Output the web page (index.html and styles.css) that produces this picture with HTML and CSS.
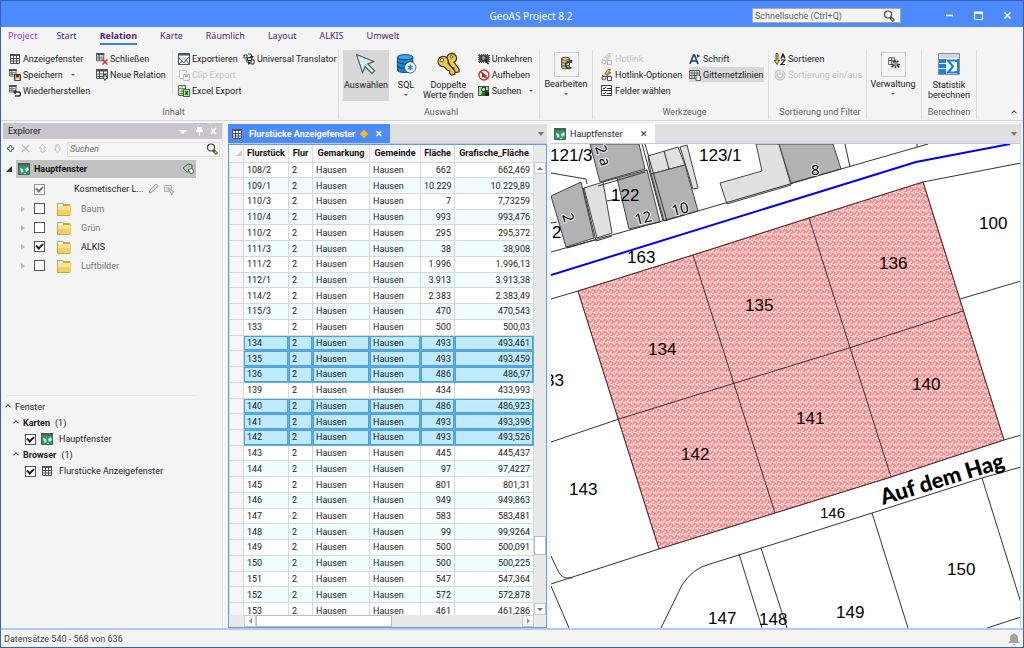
FILE: index.html
```html
<!DOCTYPE html>
<html lang="de">
<head>
  <meta charset="UTF-8" />
  <meta name="viewport" content="width=device-width, initial-scale=1.0"/>
  <title>GeoAS Project 8.2</title>
  <link rel="stylesheet" href="styles.css">
</head>
<body>
  <!-- shared icons -->
  <svg class="sprite" aria-hidden="true">
    <symbol id="i-table" viewBox="0 0 12 12">
      <path fill="#fff" d="M1 1h10v10H1z"/><path fill="#4d5358" d="M1 1h10v2H1z"/>
      <path fill="none" stroke="#4d5358" d="M1.5 1.5h9v9h-9zM1 5.5h10M1 8h10M4.5 3v8M7.5 3v8"/>
    </symbol>
    <symbol id="i-tables" viewBox="0 0 12 12">
      <path fill="#fff" stroke="#4d5358" d="M.5.5h8v8h-8z"/><path fill="#4d5358" d="M0 0h9v2.500H0z"/>
      <path fill="none" stroke="#4d5358" d="M0 4.500h8M0 6.500h8M3.500 2v6"/>
    </symbol>
    <symbol id="i-save" viewBox="0 0 12 12">
      <use href="#i-tables" width="10" height="10"/>
      <path fill="#d9a62c" stroke="#3d4043" d="M5.500 5.500h6v6h-6z"/><path fill="#3d4043" d="M7 6h3v2H7z"/><path fill="#fff" d="M7 9.500h3V11H7z"/>
    </symbol>
    <symbol id="i-restore" viewBox="0 0 12 12">
      <use href="#i-tables" width="10" height="10"/>
      <path fill="none" stroke="#2d3338" stroke-width="1.600" d="M6 7h3.500a2 2 0 0 1 0 4H6"/><path fill="#2d3338" d="M4 7l3-2.500v5z"/>
    </symbol>
    <symbol id="i-close" viewBox="0 0 12 12">
      <use href="#i-tables" width="11" height="11"/>
      <path stroke="#d92b2b" stroke-width="1.500" d="M6.500 6.500l5 5M11.500 6.500l-5 5"/>
    </symbol>
    <symbol id="i-new" viewBox="0 0 12 12">
      <path fill="#fff" stroke="#4d5358" d="M.5.5h11v9H.5z"/><path fill="#4d5358" d="M0 0h12v2.500H0z"/>
      <path stroke="#4d5358" d="M0 5h11M0 7.500h7M3.500 2v7M7.500 2v5"/>
      <path fill="#b9dbe9" stroke="#3d4043" d="M8 5.500h2v2h1.500L9 11.500 6.500 7.500H8z"/>
    </symbol>
    <symbol id="i-export" viewBox="0 0 12 12">
      <path fill="#fff" stroke="#4d5358" d="M.5.500h11v11H.5z"/><path fill="#4d5358" d="M0 0h12v2.500H0z"/>
      <path fill="none" stroke="#4d5358" d="M1 11l3-3 2 2 2-3 3 4M1 5l3 3M11 4L8 7"/><path fill="#b9dbe9" d="M4 4h4v3H4z"/>
    </symbol>
    <symbol id="i-trans" viewBox="0 0 12 12">
      <path fill="none" stroke="#2d3338" d="M1 2h3v3H1zM8 7h3v4H8zM5 1h3l1 3M3 6c0 3 2 4 4 4"/>
      <path fill="#b9dbe9" stroke="#2d3338" d="M4.500 4.500h4v3h-4z"/><path fill="#2d3338" d="M7 3h4L9 6zM5 8l3 2-3 2z"/>
    </symbol>
    <symbol id="i-clip" viewBox="0 0 12 12">
      <path fill="none" stroke="#c6c6c6" d="M1.500 1.500h7v8h-7z"/><path fill="#eee" stroke="#bdbdbd" d="M5.500 5.500h6v6h-6z"/><path fill="#bdbdbd" d="M7 6h3v2H7z"/>
    </symbol>
    <symbol id="i-excel" viewBox="0 0 12 12">
      <path fill="#fff" stroke="#566b50" d="M.5.500h7v10h-7z"/><path stroke="#5d9a4b" d="M1 3.500h6M1 6h6M1 8.500h6M4 1v9"/>
      <path fill="#d9eed2" stroke="#356d28" d="M5.500 4.500h6v7h-6z"/><path stroke="#16720d" stroke-width="1.500" d="M7 6l3 4M10 6l-3 4"/>
    </symbol>
    <symbol id="i-invert" viewBox="0 0 12 12">
      <path fill="#4d5358" d="M0 1h12v9H0z"/><path stroke="#f4f4f4" stroke-dasharray="1 1" d="M0 1.500h12M0 9.500h12M.5 1v9M11.500 1v9"/>
      <circle cx="5.500" cy="5" r="2.500" fill="#7f99a5" stroke="#22282c"/><path stroke="#22282c" stroke-width="1.500" d="M7.500 7l3 4"/>
    </symbol>
    <symbol id="i-clear" viewBox="0 0 12 12">
      <circle cx="6" cy="6" r="5" fill="#fff" stroke="#dc2b2b" stroke-width="1.400"/>
      <path fill="#3c4650" d="M4 3l5 4-2 .3 1 2-1 .5-1-2-2 1z"/><path stroke="#dc2b2b" stroke-width="1.400" d="M2.500 2.500l7 7"/>
    </symbol>
    <symbol id="i-find" viewBox="0 0 12 12">
      <path fill="#2e6b35" d="M0 1h11v10H0z"/><path fill="#a7d58b" d="M1 2h3l1 4-2 4H1zM8 2h2v3H8z"/>
      <circle cx="5.500" cy="4.500" r="2" fill="#fff" stroke="#1c2b1e"/><path stroke="#1c2b1e" stroke-width="1.500" d="M7 6l4 4"/><path fill="#1c2b1e" d="M7 7h4v4H7z"/>
    </symbol>
    <symbol id="i-link" viewBox="0 0 12 12">
      <path fill="#e7c447" stroke="#4b4a38" stroke-width=".7" d="M7 .5L3.500 5h3L5 8l5-4.500H7.500L9.500.5z"/>
      <circle cx="3" cy="9" r="2" fill="#fff" stroke="#41484d"/><path fill="#fff" stroke="#41484d" d="M6.500 7.500h4v4h-4zM1 6l2 2"/>
    </symbol>
    <symbol id="i-fields" viewBox="0 0 12 12">
      <path fill="#fff" stroke="#3b4045" d="M.5.5h10v10H.5z"/><path stroke="#22272b" fill="none" d="M2 3l1 1 2-2M2 8l1 1 2-2M6 3.500h4M6 8.500h4M1 5.500h9"/>
    </symbol>
    <symbol id="i-font" viewBox="0 0 12 12">
      <path fill="none" stroke="#1c3e70" stroke-width="1.700" d="M1 11L4.500 2h1L9 11M2.500 8h5"/><path fill="#1c3e70" d="M8 1l3 2-3 2z"/>
    </symbol>
    <symbol id="i-grid" viewBox="0 0 12 12">
      <path fill="#fff" stroke="#5a5f63" d="M.5 1.500h10v8H.5zM0 4h11M0 6.500h11M3 1v9M5.500 1v9M8 1v9"/><path fill="#e8e8e8" stroke="#5a5f63" d="M7 6h3l1.500 1.500v4H7z"/>
    </symbol>
    <symbol id="i-sort" viewBox="0 0 12 12">
      <path fill="#f0c93c" stroke="#2f2f2f" stroke-width=".8" d="M2 .5h2v7h1.500L3 11.500.5 7.500H2z"/>
      <path fill="none" stroke="#222" stroke-width="1.200" d="M7 5.500L8.800 1h.4L11 5.500M7.500 4h3M7 7h4l-4 4.500h4"/>
    </symbol>
    <symbol id="i-power" viewBox="0 0 12 12">
      <circle cx="6" cy="6" r="5" fill="none" stroke="#c4c4c4" stroke-width="1.200"/><path fill="none" stroke="#bcbcbc" stroke-width="1.300" d="M6 2.500V6M4 4a2.800 2.800 0 1 0 4 0"/>
    </symbol>
    <symbol id="i-search" viewBox="0 0 12 12">
      <circle cx="5" cy="4.500" r="3.500" fill="#fff" stroke="#3b3f42" stroke-width="1.200"/><path stroke="#3b3f42" stroke-width="3" d="M7.500 7.500l3.500 3.500"/><path stroke="#e9c84a" stroke-width="1.300" d="M8.500 8.500l2 2"/>
    </symbol>
    <symbol id="i-map" viewBox="0 0 12 12">
      <path fill="#2c9d6a" stroke="#505a55" d="M.5.500h11v11H.5z"/><path fill="#505a55" d="M0 0h12v2.500H0z"/><path fill="#cfeeda" d="M2 5l3 1 .5 3-2 1zM7 6l3-2 1 3-3 2zM6 10h2v1H6z"/>
    </symbol>
    <symbol id="i-folder" viewBox="0 0 14 14">
      <path fill="#c9a741" d="M0 1h6l1 1h6v12H0z"/><path fill="#fff" d="M1 2h5v2H1z"/><path fill="#62b9b0" d="M2 1h3v1H2z"/>
      <path fill="#ecd06a" d="M1 4h11l2-1v10H1z"/><path fill="#f7e391" d="M1 4h12v4H1z"/>
    </symbol>
  </svg>

  <header class="titlebar">
    <h1>GeoAS Project 8.2</h1>
    <div class="title-right">
      <div class="quick">
        <input type="text" aria-label="Schnellsuche" placeholder="Schnellsuche (Ctrl+Q)">
        <svg class="ico"><use href="#i-search"/></svg>
      </div>
      <div class="window-buttons">
        <button aria-label="Minimieren"><svg viewBox="0 0 9 9"><path stroke="#fff" stroke-width="1.500" d="M1 4.500h7"/></svg></button>
        <button aria-label="Maximieren"><svg viewBox="0 0 9 9"><path fill="none" stroke="#fff" d="M.5 1h8v7.500h-8z"/><path fill="#fff" d="M0 1h9v2H0z"/></svg></button>
        <button aria-label="Beenden"><svg viewBox="0 0 9 9"><path stroke="#fff" stroke-width="1.500" d="M1.500 1.500l6 6M7.500 1.500l-6 6"/></svg></button>
      </div>
    </div>
  </header>

  <nav class="tabs">
    <a href="#" class="project">Project</a>
    <a href="#">Start</a>
    <a href="#" class="active">Relation</a>
    <a href="#">Karte</a>
    <a href="#">Räumlich</a>
    <a href="#">Layout</a>
    <a href="#">ALKIS</a>
    <a href="#">Umwelt</a>
  </nav>

  <section class="ribbon">
    <div class="group g-inhalt">
      <div class="tools">
        <div class="col c-window">
          <button class="tool"><svg class="ico"><use href="#i-table"/></svg>Anzeigefenster</button>
          <button class="tool"><svg class="ico"><use href="#i-save"/></svg>Speichern<i class="caret"></i></button>
          <button class="tool"><svg class="ico"><use href="#i-restore"/></svg>Wiederherstellen</button>
        </div>
        <div class="col c-rel">
          <button class="tool"><svg class="ico"><use href="#i-close"/></svg>Schließen</button>
          <button class="tool"><svg class="ico"><use href="#i-new"/></svg>Neue Relation</button>
        </div>
        <div class="col c-export">
          <button class="tool"><svg class="ico"><use href="#i-export"/></svg>Exportieren</button>
          <button class="tool" disabled><svg class="ico"><use href="#i-clip"/></svg>Clip Export</button>
          <button class="tool"><svg class="ico"><use href="#i-excel"/></svg>Excel Export</button>
        </div>
        <div class="col">
          <button class="tool"><svg class="ico"><use href="#i-trans"/></svg>Universal Translator</button>
        </div>
      </div>
      <h2>Inhalt</h2>
    </div>

    <div class="group g-auswahl">
      <div class="tools">
        <button class="big pressed">
          <svg viewBox="0 0 28 28"><path fill="#d3edf6" stroke="#4b555b" stroke-width="1.300" d="M3 3l20 8-7 3 8 8-3 3-8-8-3 7z"/></svg>
          Auswählen
        </button>
        <button class="big">
          <svg viewBox="0 0 28 28"><path fill="#1687d0" stroke="#0d3d63" d="M4 6v15c0 4 18 4 18 0V6"/><ellipse cx="13" cy="6" rx="9" ry="3" fill="#3fa7e4" stroke="#0d3d63"/><path fill="none" stroke="#0d3d63" d="M4 11c0 4 18 4 18 0M4 16c0 4 18 4 18 0"/><circle cx="19" cy="18" r="6.500" fill="#fff" stroke="#33556c"/><path stroke="#1687d0" stroke-width="1.500" d="M19 14.500v7M16 16.300l6 3.500M22 16.300l-6 3.500"/></svg>
          SQL
          <i class="caret"></i>
        </button>
        <button class="big">
          <svg viewBox="0 0 28 28"><g fill="#efc94b" stroke="#3b3522" stroke-width="1.400"><path d="M13 8a5.500 5.500 0 1 1 8 4l6 8v3l-4 1-2-2v-3l-3-1-3-5z"/><path d="M9 17a6 6 0 1 1 5-4l8 9v4l-4 1-2-2v-3l-3-1z"/></g><circle cx="7" cy="9.500" r="2" fill="#fff" stroke="#3b3522"/><circle cx="18" cy="5.500" r="1.500" fill="#fff" stroke="#3b3522"/></svg>
          Doppelte<br>Werte finden
        </button>
        <div class="col">
          <button class="tool"><svg class="ico"><use href="#i-invert"/></svg>Umkehren</button>
          <button class="tool"><svg class="ico"><use href="#i-clear"/></svg>Aufheben</button>
          <button class="tool"><svg class="ico"><use href="#i-find"/></svg>Suchen<i class="caret"></i></button>
        </div>
      </div>
      <h2>Auswahl</h2>
    </div>

    <div class="group g-edit">
      <div class="tools">
        <button class="big framed">
          <svg viewBox="0 0 24 24"><path fill="#edc54b" stroke="#3b3d3f" d="M7 6c0-2 8-2 8 0v9c0 2-8 2-8 0zM7 9c0 2 8 2 8 0M7 12c0 2 8 2 8 0M7 6c0 2 8 2 8 0"/><path fill="none" stroke="#3d4650" stroke-width="2" d="M17 10a3.500 3.500 0 1 0 0 5"/><path fill="#3d4650" d="M14 7h4v4z"/></svg>
          Bearbeiten
          <i class="caret"></i>
        </button>
      </div>
    </div>

    <div class="group g-werkzeuge">
      <div class="tools">
        <div class="col c-link">
          <button class="tool faded" disabled><svg class="ico"><use href="#i-link"/></svg>Hotlink</button>
          <button class="tool"><svg class="ico"><use href="#i-link"/></svg>Hotlink-Optionen</button>
          <button class="tool"><svg class="ico"><use href="#i-fields"/></svg>Felder wählen</button>
        </div>
        <div class="col">
          <button class="tool"><svg class="ico"><use href="#i-font"/></svg>Schrift</button>
          <button class="tool pressed"><svg class="ico"><use href="#i-grid"/></svg>Gitternetzlinien</button>
        </div>
      </div>
      <h2>Werkzeuge</h2>
    </div>

    <div class="group g-sort">
      <div class="tools">
        <div class="col">
          <button class="tool"><svg class="ico"><use href="#i-sort"/></svg>Sortieren</button>
          <button class="tool" disabled><svg class="ico"><use href="#i-power"/></svg>Sortierung ein/aus</button>
        </div>
      </div>
      <h2>Sortierung und Filter</h2>
    </div>

    <div class="group g-admin">
      <div class="tools">
        <button class="big framed">
          <svg viewBox="0 0 24 24"><path fill="#fff" stroke="#53595d" d="M7 5h6v7H7zM7 8h6M10 5v7"/><path stroke="#3d4448" stroke-width="1.500" d="M11 8l7 7M17 8l-7 7M14 7v9M10 12h9"/><circle cx="14" cy="11.500" r="2" fill="#7fa58c"/></svg>
          Verwaltung
          <i class="caret"></i>
        </button>
      </div>
    </div>

    <div class="group g-calc">
      <div class="tools">
        <button class="big">
          <svg viewBox="2 2 24 24"><path fill="#fff" stroke="#8a8f93" d="M3.500 3.500h21v21h-21z"/><path fill="#d5d7d9" d="M4 4h20v4H4z"/><path fill="#1b80e4" d="M4 9h7v4H4zM4 14h7v4H4zM4 19h7v5H4zM22 9h2v15h-2z"/><path fill="none" stroke="#1b80e4" stroke-width="2.200" d="M21 12v-1.500h-8l5 6-5 6h8V21"/></svg>
          Statistik<br>berechnen
        </button>
      </div>
      <h2>Berechnen</h2>
    </div>
    <button class="collapse" aria-label="Menüband einklappen"><i class="chev"></i></button>
  </section>

  <main>
    <aside class="explorer">
      <div class="panel-head">
        <h2>Explorer</h2>
        <svg viewBox="0 0 44 12"><path fill="#fff" d="M2 5h8L6 9zM19 5h7v2h-3v4h-1V7h-3zM20 2h5v3h-5z"/><path stroke="#fff" stroke-width="1.500" d="M34 3l5 6M39 3l-5 6"/></svg>
      </div>
      <div class="search-row">
        <svg viewBox="0 0 58 12">
          <path fill="#fff" stroke="#54707c" d="M4.500 2.500h2v2h2v2h-2v2h-2v-2h-2v-2h2z"/>
          <path stroke="#b7bcc0" stroke-width="1.300" d="M17 2l7 7M24 2l-7 7"/>
          <path fill="#fff" stroke="#b3bcc2" d="M37.500 1.500l3 3.500h-1.500v4h-3V5h-1.500zM52.500 9.500l3-3.500H54V2h-3v4h-1.500z"/>
        </svg>
        <input type="text" aria-label="Ebenen suchen" placeholder="Suchen">
        <svg class="ico"><use href="#i-search"/></svg>
      </div>
      <ul class="tree">
        <li class="root"><i class="open"></i><div><svg class="ico"><use href="#i-map"/></svg><b>Hauptfenster</b>
          <svg class="tag" viewBox="0 0 12 12"><path fill="#a8cfab" stroke="#4d5a52" d="M1 5l5-4 4 1v7H5z"/><path fill="#fff" stroke="#4d5a52" d="M6 7l4-2 2 4-3 2z"/></svg></div></li>
        <li class="cosmetic"><input type="checkbox" id="l0" checked disabled><label for="l0">Kosmetischer L...</label>
          <svg class="edit" viewBox="0 0 28 12"><path fill="#ddd" stroke="#a5a5a5" d="M2 10l1-3 6-6 2 2-6 6z"/><path fill="#ddd" stroke="#b2b2b2" d="M17.500 2.500h7v6h-7z"/><path fill="#eee" stroke="#a5a5a5" d="M21 5l6 4-2 .5V12z"/></svg></li>
        <li><i class="closed"></i><input type="checkbox" id="l1"><svg class="folder"><use href="#i-folder"/></svg><label for="l1">Baum</label></li>
        <li><i class="closed"></i><input type="checkbox" id="l2"><svg class="folder"><use href="#i-folder"/></svg><label for="l2">Grün</label></li>
        <li class="on"><i class="closed"></i><input type="checkbox" id="l3" checked><svg class="folder"><use href="#i-folder"/></svg><label for="l3">ALKIS</label></li>
        <li><i class="closed"></i><input type="checkbox" id="l4"><svg class="folder"><use href="#i-folder"/></svg><label for="l4">Luftbilder</label></li>
      </ul>
      <div class="windows">
        <h3><i class="chev"></i>Fenster</h3>
        <h4><i class="chev"></i><b>Karten</b> (1)</h4>
        <div class="win"><input type="checkbox" id="w1" checked><svg class="ico"><use href="#i-map"/></svg><label for="w1">Hauptfenster</label></div>
        <h4><i class="chev"></i><b>Browser</b> (1)</h4>
        <div class="win"><input type="checkbox" id="w2" checked><svg class="ico"><use href="#i-table"/></svg><label for="w2">Flurstücke Anzeigefenster</label></div>
      </div>
    </aside>

    <section class="pane browser">
      <div class="pane-tabs">
        <div class="pane-tab"><svg class="ico"><use href="#i-table"/></svg><span>Flurstücke Anzeigefenster</span><i class="diamond"></i><button aria-label="Schließen">✕</button></div>
        <i class="down"></i>
      </div>
      <div class="frame">
        <div class="sheet">
          <table>
            <colgroup><col class="c0"><col class="c1"><col class="c2"><col class="c3"><col class="c4"><col class="c5"><col class="c6"></colgroup>
            <thead>
              <tr><th><i class="corner"></i></th><th>Flurstück</th><th>Flur</th><th>Gemarkung</th><th>Gemeinde</th><th>Fläche</th><th>Grafische_Fläche</th></tr>
            </thead>
            <tbody id="rows"></tbody>
          </table>
        </div>
        <div class="vbar"><button aria-label="Nach oben"><i class="tri up"></i></button><span class="thumb"></span><button aria-label="Nach unten"><i class="tri dn"></i></button></div>
        <div class="hbar"><button aria-label="Nach links"><i class="tri lt"></i></button><span class="thumb"></span><button aria-label="Nach rechts"><i class="tri rt"></i></button></div>
      </div>
    </section>

    <section class="pane mapview">
      <div class="pane-tabs">
        <div class="pane-tab"><svg class="ico"><use href="#i-map"/></svg><span>Hauptfenster</span><button aria-label="Schließen">✕</button></div>
        <i class="down"></i>
      </div>
      <svg class="map" viewBox="551 144 469 484" preserveAspectRatio="xMinYMin slice">
        <defs>
          <pattern id="weave" width="6" height="6" patternUnits="userSpaceOnUse">
            <path fill="#ff7f7f" d="M0 0h6v6H0z"/>
            <path stroke="#fff" stroke-width="1.200" d="M0 0l3 3M3 6l3-3M3 0l1 1M2 5l-1 1M5 1l1-1"/>
          </pattern>
        </defs>
        <!-- buildings -->
        <g class="light">
          <path d="M584 188l19-6 9 51-15 5zM648 156l30-9 7 18-34 9zM680 147l7-2 11 43-5 1zM756 144l6 27-42 12 7 21 64-19-12-41z"/>
        </g>
        <g class="house">
          <path d="M590 144l10 38 45-13-6-25zM551 196l30-14 13 56-28 9zM617 178l30-8 13 52-31 7zM651 174l34-9 13 46-34 10zM779 144l12 39 50-14-8-25z"/>
        </g>
        <g class="line">
          <path d="M551 252L698 211 841 169 928 144M551 299L578 291M923 182L1021 163M845 144l5 23M917 144v3"/>
          <path d="M642 144l21 77M645 144l22 77M603 182l14-4M598 186l47-14M583 188l13 53 16-5M567 248l28-8M664 151l5 18M551 173l35 6 1 5M551 223l6-1M607 201l10-2"/>
          <path d="M960 299l61-18M1004 440l17-5M551 442l68-23M551 584l108-35M551 556l8 17q3 5 8 5h5M551 586l18 42"/>
          <path d="M661 628l21-43q11-17 28-21L790 539 872 513 982 478 1021 467M739 554l23 74M761 548l26 80M872 513l36 115M982 478l39 125M987 628l34-11"/>
        </g>
        <!-- selected parcels -->
        <path fill="url(#weave)" stroke="#e03030" stroke-width=".7" d="M578 291L693 255 809 218 923 182 1004 440 891 477 775 513 659 549z"/>
        <path class="line" d="M578 291L693 255 809 218 923 182 1004 440 891 477 775 513 659 549zM693 255l82 258M809 218l82 259M619 419l116-36 114-35 114-37"/>
        <path class="water" d="M551 275L790 201 916 162 1010 144"/>
        <g class="num">
          <text x="550" y="161">121/3</text><text x="699" y="161">123/1</text>
          <text x="611" y="201">122</text><text x="552" y="238">2</text>
          <text x="627" y="263">163</text><text x="979" y="229">100</text>
          <text x="648" y="355">134</text><text x="745" y="311">135</text><text x="879" y="269">136</text>
          <text x="912" y="390">140</text><text x="796" y="424">141</text><text x="681" y="460">142</text>
          <text x="569" y="495">143</text><text x="545" y="386">33</text>
          <text x="708" y="624">147</text><text x="759" y="625">148</text>
          <text x="836" y="618">149</text><text x="947" y="575">150</text>
          <text x="820" y="518" class="road">146</text>
        </g>
        <g class="nr">
          <text transform="translate(595 147) rotate(73)">2 a</text>
          <text transform="translate(562 215) rotate(73)">2</text>
          <text transform="translate(636 225) rotate(-13)">12</text>
          <text transform="translate(673 216) rotate(-13)">10</text>
          <text transform="translate(811 175)">8</text>
        </g>
        <text class="street" transform="translate(883 505) rotate(-17)">Auf dem Hag</text>
      </svg>
    </section>
  </main>

  <footer>
    <span>Datensätze 540 - 568 von 636</span>
    <svg viewBox="0 0 12 12"><path fill="#a3a3a3" d="M6 0l1 1c2 .5 3 2 3 4v3l2 2H0l2-2V5c0-2 1-3.500 3-4zM4.500 11h3l-1.500 1z"/></svg>
  </footer>

  <script>
    const data = [
      ["108/2", "662", "662,469"],
      ["109/1", "10.229", "10.229,89"],
      ["110/3", "7", "7,73259"],
      ["110/4", "993", "993,476"],
      ["110/2", "295", "295,372"],
      ["111/3", "38", "38,908"],
      ["111/2", "1.996", "1.996,13"],
      ["112/1", "3.913", "3.913,38"],
      ["114/2", "2.383", "2.383,49"],
      ["115/3", "470", "470,543"],
      ["133", "500", "500,03"],
      ["134", "493", "493,461"],
      ["135", "493", "493,459"],
      ["136", "486", "486,97"],
      ["139", "434", "433,993"],
      ["140", "486", "486,923"],
      ["141", "493", "493,396"],
      ["142", "493", "493,526"],
      ["143", "445", "445,437"],
      ["144", "97", "97,4227"],
      ["145", "801", "801,31"],
      ["146", "949", "949,863"],
      ["147", "583", "583,481"],
      ["148", "99", "99,9264"],
      ["149", "500", "500,091"],
      ["150", "500", "500,225"],
      ["151", "547", "547,364"],
      ["152", "572", "572,878"],
      ["153", "461", "461,286"]
    ];
    const selected = ["134", "135", "136", "140", "141", "142"];
    const rows = document.getElementById("rows");

    data.forEach(([nr, area, geo]) => {
      const tr = document.createElement("tr");
      if (selected.includes(nr)) tr.className = "selected";
      ["", nr, "2", "Hausen", "Hausen", area, geo].forEach(value => {
        const td = document.createElement("td");
        td.textContent = value;
        tr.appendChild(td);
      });
      rows.appendChild(tr);
    });
  </script>
</body>
</html>
```

FILE: styles.css
```css
*, *::before {
  box-sizing: border-box;
}

body {
  margin: 0;
  height: 100vh;
  display: flex;
  flex-direction: column;
  background: #f4f4f4;
  border: 1px solid #3564b0;
  color: #222;
  font-family: Roboto, 'Segoe UI', sans-serif;
  font-size: 9px;
  line-height: 12px;
  overflow: hidden;
}

h1, h2, h3, h4, ul {
  margin: 0;
  padding: 0;
  font-size: 9px;
  font-weight: normal;
}

button {
  padding: 0;
  border: none;
  background: none;
  color: inherit;
  font: inherit;
}

input {
  font: inherit;
  outline: none;
}

svg {
  flex: none;
}

.sprite {
  position: absolute;
  width: 0;
  height: 0;
}

.ico {
  width: 12px;
  height: 12px;
}

/* title bar */
.titlebar {
  flex: none;
  height: 26px;
  display: grid;
  grid-template-columns: 1fr auto 1fr;
  align-items: center;
  background: #4c8afe;
  color: #fff;
}

.titlebar h1 {
  grid-column: 2;
  padding-left: 38px;
  padding-top: 3px;
  font: 10px/14px 'Noto Sans', sans-serif;
}

.title-right {
  display: flex;
  align-items: center;
  justify-content: flex-end;
  padding-top: 3px;
}

.quick {
  display: flex;
  align-items: center;
  width: 149px;
  height: 15px;
  padding-right: 5px;
  background: #f4f4f4;
  border: 1px solid #aaa;
}

.quick input {
  flex: 1;
  min-width: 0;
  padding: 0 2px;
  border: none;
  background: none;
}

::placeholder {
  color: #666;
  opacity: 1;
}

.window-buttons {
  display: flex;
  gap: 20px;
  padding: 0 11px 0 44px;
}

.window-buttons svg {
  display: block;
  width: 9px;
  height: 9px;
}

/* menu tabs */
.tabs {
  flex: none;
  display: flex;
  gap: 23px;
  height: 21px;
  padding: 1px 7px 0;
  font-family: 'Noto Sans', sans-serif;
}

.tabs a {
  height: 17px;
  line-height: 15px;
  color: #4f1c7c;
  text-decoration: none;
}

.tabs .project {
  margin-right: -4px;
  color: #9c36e0;
}

.tabs .active {
  font-weight: bold;
  border-bottom: 2px solid #3b7df2;
}

/* ribbon */
.ribbon {
  flex: none;
  display: flex;
  height: 73px;
  padding-top: 2px;
  border-bottom: 1px solid #d5d5d5;
}

.group {
  flex: none;
  display: flex;
  flex-direction: column;
  height: 69px;
  padding-bottom: 1px;
  border-right: 1px solid #ddd;
}

.group h2 {
  text-align: center;
  color: #666;
}

.tools {
  flex: 1;
  display: flex;
}

.g-inhalt { width: 338px; padding-left: 8px; }
.g-auswahl { width: 201px; padding-left: 4px; }
.g-edit { width: 53px; }
.g-werkzeuge { width: 176px; padding-left: 8px; }
.g-sort { width: 98px; padding-left: 5px; }
.g-admin { width: 55px; }
.g-calc { width: 55px; }

.col {
  display: flex;
  flex-direction: column;
  align-items: flex-start;
}

.c-window { width: 87px; }
.c-rel { width: 77px; height: 44px; border-right: 1px solid #ddd; margin-right: 5px; }
.c-export { width: 65px; }
.c-link { width: 88px; }

.tool {
  display: flex;
  align-items: center;
  gap: 2px;
  height: 16px;
  white-space: nowrap;
}

.tool:first-child {
  height: 17px;
}

.tool:disabled {
  color: #c4c4c4;
}

.faded svg {
  opacity: .35;
}

.tool .caret {
  margin-left: 6px;
}

.caret {
  border: 2px solid transparent;
  border-top-color: #666;
  border-bottom: none;
}

.pressed {
  background: #d8d8d8;
}

.tool.pressed {
  height: 15px;
  padding-right: 1px;
}

.big {
  display: flex;
  flex-direction: column;
  align-items: center;
  height: 51px;
  min-width: 34px;
  line-height: 10px;
}

.big.pressed {
  width: 46px;
}

.big svg {
  width: 24px;
  height: 24px;
  margin: 2px 0 4px;
}

.big .caret {
  margin-top: 4px;
}

.big.framed {
  width: 52px;
}

.big.framed svg {
  width: 25px;
  height: 25px;
  margin: 2px 0;
  border: 1px solid #ccc;
}

.g-auswahl .col {
  margin-left: 4px;
}

.g-calc .big {
  width: 54px;
}

.collapse {
  margin: auto 7px 2px auto;
}

.chev {
  display: inline-block;
  width: 4px;
  height: 4px;
  border: solid #444;
  border-width: 1px 0 0 1px;
  transform: rotate(45deg);
}

/* work area */
main {
  flex: 1;
  min-height: 0;
  display: flex;
  padding: 2px 2px 0;
}

.explorer {
  flex: none;
  width: 220px;
  margin-right: 5px;
  border-right: 1px solid #e4e4e4;
  display: flex;
  flex-direction: column;
}

.panel-head {
  display: flex;
  align-items: center;
  justify-content: space-between;
  height: 16px;
  padding: 0 1px 0 5px;
  background: #c9c5cf;
}

.panel-head svg {
  width: 44px;
  height: 12px;
}

.search-row {
  display: flex;
  align-items: center;
  height: 20px;
  padding-right: 2px;
}

.search-row svg:first-child {
  width: 58px;
  height: 12px;
  margin: 0 4px 0 2px;
}

.search-row input {
  flex: 1;
  min-width: 0;
  height: 15px;
  padding: 0 2px;
  border: 1px solid #ddd;
  background: #f7f7f7;
  font-style: italic;
}

.search-row .ico {
  margin-left: -14px;
  margin-right: 2px;
}

.tree {
  list-style: none;
}

.tree li {
  display: flex;
  align-items: center;
  height: 19px;
  padding-left: 18px;
  color: #777;
}

.tree .on {
  color: #222;
}

.tree .root, .tree .cosmetic {
  height: 20px;
}

.tree .root {
  padding: 0 26px 0 3px;
  color: #111;
}

.root div {
  flex: 1;
  display: flex;
  align-items: center;
  gap: 4px;
  height: 18px;
  margin-left: 4px;
  padding: 0 2px;
  background: #c1c1c1;
}

.tag {
  width: 12px;
  height: 12px;
  margin-left: auto;
}

.open {
  border: solid transparent;
  border-width: 0 0 6px 6px;
  border-bottom-color: #333;
}

.closed {
  width: 4px;
  border: solid transparent;
  border-width: 3px 0 3px 4px;
  border-left-color: #bbb;
}

.tree .folder {
  width: 14px;
  height: 14px;
  margin: 0 10px 0 12px;
}

.tree .cosmetic {
  padding-left: 22px;
  color: #222;
}

.cosmetic label {
  margin-left: 29px;
}

.edit {
  width: 28px;
  height: 12px;
  margin-left: 4px;
}

input[type="checkbox"] {
  appearance: none;
  flex: none;
  width: 11px;
  height: 11px;
  margin: 0;
  border: 1px solid #555;
  background: #fff;
}

input[type="checkbox"]:checked::before {
  content: "";
  display: block;
  width: 7px;
  height: 5px;
  margin: 1px;
  border: solid #222;
  border-width: 0 0 2px 2px;
  transform: rotate(-45deg);
}

input[type="checkbox"]:disabled {
  opacity: .6;
}

.tree li input[type="checkbox"] {
  margin-left: 9px;
}

.windows {
  margin: auto 26px 149px 3px;
  padding-top: 3px;
  border-top: 1px solid #e8e8e8;
}

.windows h3, .windows h4, .win {
  display: flex;
  align-items: center;
  height: 16px;
  gap: 5px;
}

.windows h4 {
  padding-left: 8px;
}

.win {
  padding-left: 19px;
}

.win label {
  margin-left: 1px;
}

/* document panes */
.pane {
  display: flex;
  flex-direction: column;
  min-width: 0;
  padding-top: 1px;
}

.browser {
  flex: none;
  width: 319px;
  margin-right: 4px;
}

.mapview {
  flex: 1;
  border-right: 1px solid #c9d6ec;
}

.pane-tabs {
  flex: none;
  display: flex;
  align-items: center;
  justify-content: space-between;
  height: 20px;
  padding-right: 3px;
  background: #e0e0e0;
  border-bottom: 1px solid #b9cdf0;
}

.pane-tab {
  align-self: stretch;
  display: flex;
  align-items: center;
  gap: 4px;
  padding: 0 7px 0 3px;
  background: #fff;
}

.pane-tab button {
  margin-left: 14px;
}

.browser .pane-tab {
  gap: 6px;
  background: #4c8afe;
  color: #fff;
  font-weight: bold;
}

.browser .pane-tab button {
  margin-left: 2px;
}

.diamond {
  width: 6px;
  height: 6px;
  background: #f6bd1a;
  transform: rotate(45deg);
}

.down {
  border: 3px solid transparent;
  border-top: 4px solid #777;
  border-bottom: none;
}

.frame {
  flex: 1;
  min-height: 0;
  display: grid;
  grid-template-columns: minmax(0, 1fr) 12px;
  grid-template-rows: minmax(0, 1fr) 12px;
  border: 1px solid #6d9ccc;
  background: #ececec;
}

.sheet {
  overflow: hidden;
}

table {
  width: 100%;
  height: calc(100% + 4px);
  table-layout: fixed;
  border-collapse: collapse;
}

.c0 { width: 14px; }
.c1 { width: 45px; }
.c2 { width: 24px; }
.c3 { width: 57px; }
.c4 { width: 51px; }
.c5 { width: 34px; }

th {
  height: 17px;
  padding: 0 2px;
  background: #f8f8f8;
  border-right: 1px solid #ddd;
  color: #111;
  white-space: nowrap;
}

td {
  padding: 0 3px;
  line-height: 10px;
  background: #fff;
  border: 1px solid #d8d8d8;
}

tbody tr:nth-child(even) td {
  background: #f0feff;
}

td:nth-child(n+6) {
  text-align: right;
}

tbody tr td:first-child, tbody tr:nth-child(even) td:first-child {
  background: #f6f6f8;
}

tbody .selected td:nth-child(n+2), tbody .selected:nth-child(even) td:nth-child(n+2) {
  background: #beebff;
  border-color: #6aa9da;
  box-shadow: inset 0 0 0 1px #4aa0e0;
}

.corner {
  display: block;
  margin-left: 4px;
  width: 0;
  border: solid transparent;
  border-width: 0 0 6px 6px;
  border-bottom-color: #ccc;
}

.vbar, .hbar {
  display: flex;
  background: #e9e9e9;
}

.vbar {
  flex-direction: column;
  padding-top: 17px;
}

.hbar {
  padding-left: 15px;
}

.vbar button, .hbar button {
  display: flex;
  align-items: center;
  justify-content: center;
  width: 12px;
  height: 12px;
  background: #f8f8f8;
  border: 1px solid #ccc;
}

.thumb {
  background: #fff;
  border: 1px solid #bbb;
}

.vbar .thumb {
  height: 19px;
  margin: auto 0 48px;
}

.hbar .thumb {
  width: 136px;
  margin-right: auto;
}

.tri {
  border: 3px solid transparent;
}

.up { border-top: none; border-bottom-color: #777; }
.dn { border-bottom: none; border-top-color: #777; }
.lt { border-left: none; border-right-color: #999; }
.rt { border-right: none; border-left-color: #999; }

/* map */
.map {
  flex: 1;
  min-height: 0;
  width: 100%;
  background: #fff;
}

.line {
  fill: none;
  stroke: #333;
}

.light, .house {
  fill: #e0e0e0;
  stroke: #444;
}

.house {
  fill: #b2b2b2;
}

.water {
  fill: none;
  stroke: #00f;
  stroke-width: 2;
}

.num {
  font: 17px 'Liberation Sans', sans-serif;
  fill: #000;
}

.num .road {
  font-size: 15px;
}

.nr {
  font: 15px 'Noto Sans', sans-serif;
  stroke: #eee;
  stroke-width: 2;
  paint-order: stroke;
}

.street {
  font: 900 22px Lato, sans-serif;
}

/* status bar */
footer {
  flex: none;
  display: flex;
  align-items: center;
  justify-content: space-between;
  height: 19px;
  padding: 0 3px;
  border-top: 2px solid #b3cbee;
  color: #444;
}

footer svg {
  width: 12px;
  height: 12px;
}
```
